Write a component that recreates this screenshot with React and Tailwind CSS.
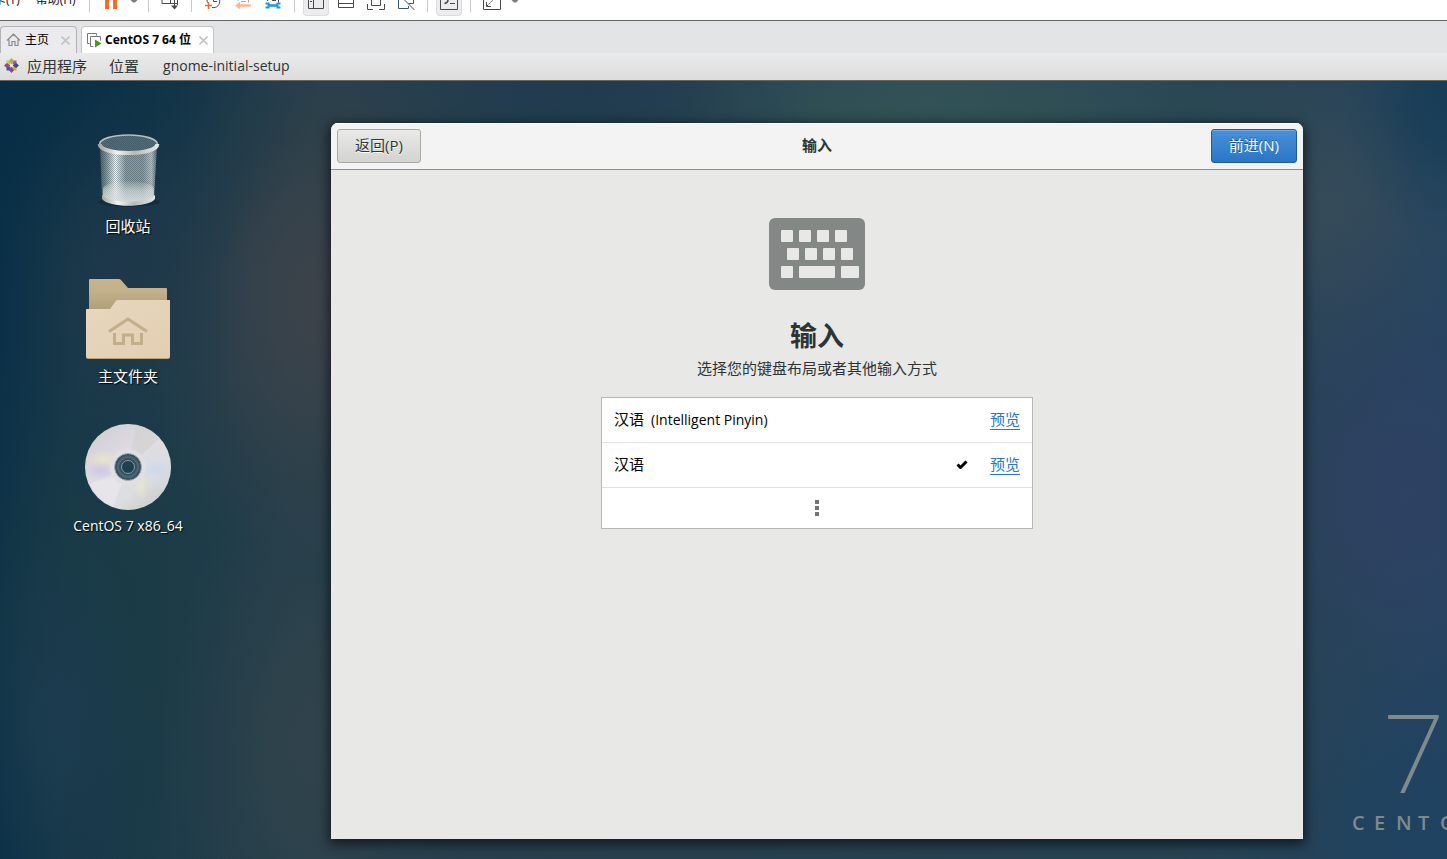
import React from "react";

const LATIN = "font-['Open_Sans','Noto_Sans_CJK_SC',sans-serif]";

function Separator() {
  return <span aria-hidden="true" className="mx-1.5 h-3 w-px shrink-0 bg-[#c9c9c9]" />;
}

function ToolButton({ label, active = false, children }) {
  return (
    <button
      type="button"
      aria-label={label}
      className={
        active
          ? "mx-0.5 flex h-4 w-[26px] shrink-0 justify-center rounded-b border border-t-0 border-[#dcdcdd] bg-[#ececee]"
          : "mx-0.5 flex h-4 w-[26px] shrink-0 justify-center"
      }
    >
      <svg className="shrink-0" width="18" height="12" viewBox="0 0 18 12" fill="none" stroke="#4a4a4a" strokeWidth="1">
        {children}
      </svg>
    </button>
  );
}

function CaretButton({ label }) {
  return (
    <button type="button" aria-label={label} className="flex w-4 shrink-0 justify-center">
      <svg width="8" height="4" viewBox="0 0 8 4" fill="#7c7c7c">
        <path d="M0.5 0h7L5 2.4H3z" />
      </svg>
    </button>
  );
}

function Toolbar() {
  return (
    <header className="flex h-5 shrink-0 items-start overflow-hidden bg-white">
      <nav className="-mt-2 mr-[7px] -ml-[30px] flex gap-4 text-xs/4 text-[#111] font-['Open_Sans','Noto_Sans_CJK_SC',sans-serif]">
        <button type="button" className="whitespace-nowrap">选项卡(T)</button>
        <button type="button" className="whitespace-nowrap">帮助(H)</button>
      </nav>
      <Separator />
      <ToolButton label="暂停">
        <path d="M3 0h4v9H3zM11 0h4v9h-4z" fill="#ff6a1f" stroke="none" />
      </ToolButton>
      <CaretButton label="电源选项" />
      <Separator />
      <ToolButton label="发送 Ctrl+Alt+Del">
        <path d="M1 0v3.500H10M9.500 0v3.500M16.500 0v5M13.500 0v8M10 3.500h6" />
        <path d="M10 5.500h7l-3.500 4z" fill="#4a4a4a" stroke="none" />
      </ToolButton>
      <Separator />
      <ToolButton label="拍摄快照">
        <path d="M3 0c0 1 .3 2 .8 2.8M8 7.4C13 8.500 16.200 4.500 15.700 0M9.500 0v1.500H13" />
        <path d="M4.500 2v7M1 5.500h7" stroke="#f2692a" strokeWidth="1.500" />
      </ToolButton>
      <ToolButton label="恢复快照">
        <path d="M4 0v1M14.500 0v2.500M7 1.500h5" stroke="#a8a8a8" />
        <path d="M6 2 1.500 5.500 6 9V6.500h10.500v-2H6z" fill="#ffb48f" stroke="#ffb48f" strokeWidth="0.500" />
      </ToolButton>
      <ToolButton label="管理快照">
        <path d="M3.500 0v1M14.500 0v2.500M8 .5h4" />
        <path d="M4 5.500h9" stroke="#2696e0" strokeWidth="2.600" />
        <path d="M1.500 3.500h3v4h-3M16.500 3.500h-3v4h3" stroke="#2696e0" strokeWidth="2" />
      </ToolButton>
      <Separator />
      <ToolButton label="显示库" active>
        <path d="M1.500 0v8.500h15V0M6.500 0v8M3 1.500h2" />
      </ToolButton>
      <ToolButton label="缩略图栏">
        <path d="M1.500 0v7.500h15V0M1.500 3.500h15" />
      </ToolButton>
      <ToolButton label="全屏">
        <path d="M4.500 0v5.500h9V0M.5 4v5.500H6M12 9.500h5.500V4" />
      </ToolButton>
      <ToolButton label="Unity">
        <path d="M1.500 0v8.500h10V6M11.500 3.500h5V0" stroke="#33566f" />
        <path d="M5.500-2 17.500 10" />
      </ToolButton>
      <Separator />
      <ToolButton label="控制台视图" active>
        <path d="M.5 0v9.500h17V0M10 3.500h5" />
        <path d="M4.500 3.500C7 3 8 1.500 8 0" strokeWidth="1.500" />
      </ToolButton>
      <Separator />
      <ToolButton label="自由拉伸">
        <path d="M.5 0v9.500h17V0M3.500 2v4.500H8" />
        <path d="m4 6 7-7" strokeDasharray="2 1" />
      </ToolButton>
      <CaretButton label="拉伸选项" />
    </header>
  );
}

function CloseGlyph() {
  return (
    <svg width="9" height="9" viewBox="0 0 9 9" stroke="#c3c3c3" strokeWidth="1.600">
      <path d="M.5.5l8 8M8.500.5l-8 8" />
    </svg>
  );
}

function TabStrip() {
  return (
    <div className={`flex h-8 shrink-0 items-end gap-1 bg-[#e3e4e6] text-xs text-black ${LATIN}`}>
      <div className="flex h-[27px] items-center rounded-t border border-b-0 border-[#b4b4b6] bg-[#ebebed] px-1.5 pl-[5px]">
        <button type="button" className="flex items-center gap-1">
          <svg width="15" height="14" viewBox="0 0 15 14" fill="none" stroke="#8b8b8b" strokeWidth="1.200">
            <path d="M1 7.500 7.500 1.200 14 7.500M3 6.500v6h3V8.500h3v4h3v-6" />
          </svg>
          <span>主页</span>
        </button>
        <button type="button" aria-label="关闭主页" className="ml-3">
          <CloseGlyph />
        </button>
      </div>
      <div className="flex h-[27px] items-center rounded-t border border-b-0 border-[#c4c4c6] bg-white px-[5px]">
        <button type="button" className="flex items-center gap-[3px] font-bold">
          <svg width="15" height="15" viewBox="0 0 15 15" fill="none" stroke="#777">
            <path d="M2.500 10.500h-2V.5h9v2M6.500 13.500h-3V3.500h10v4" />
            <path d="M8 6.500v8l6.500-4z" fill="#3f9c1c" stroke="none" />
          </svg>
          <span className="whitespace-nowrap">CentOS 7 64 位</span>
        </button>
        <button type="button" aria-label="关闭 CentOS 7 64 位" className="ml-2">
          <CloseGlyph />
        </button>
      </div>
    </div>
  );
}

function CentosMark() {
  return (
    <svg width="15" height="15" viewBox="0 0 15 15">
      <path d="M2.500 2.500h4v4h-4z" fill="#b9cf52" />
      <path d="M8.500 2.500h4v4h-4z" fill="#a8559b" />
      <path d="M2.500 8.500h4v4h-4z" fill="#4d5796" />
      <path d="M8.500 8.500h4v4h-4z" fill="#e6a52e" />
      <path d="M7.500 0 10 2.800 7.500 6.500 5 2.800z" fill="#a9b53c" />
      <path d="M7.500 15 5 12.200l2.500-3.700L10 12.200z" fill="#7d4a96" />
      <path d="M0 7.500 2.800 5l3.700 2.500L2.800 10z" fill="#a23d91" />
      <path d="M15 7.500 12.200 10 8.500 7.500 12.200 5z" fill="#3b478d" />
      <circle cx="7.500" cy="7.500" r="1.200" fill="#f2f2f2" />
    </svg>
  );
}

function GnomePanel() {
  return (
    <nav
      className={`flex h-7 shrink-0 items-center gap-[22px] border-b border-[#66665f] bg-linear-to-b from-[#ebebeb] to-[#dcdcdc] pb-0.5 pl-1 text-[15px]/6 text-[#2e3436] ${LATIN}`}
    >
      <button type="button" className="flex items-center gap-2">
        <CentosMark />
        <span>应用程序</span>
      </button>
      <button type="button">位置</button>
      <button type="button" className="pl-0.5 text-sm/6">gnome-initial-setup</button>
    </nav>
  );
}

function Wallpaper() {
  const glows = [
    ["g1", "#1a3b45", 100, 540, 200, 320],
    ["g2", "#41444a", 325, 220, 190, 270],
    ["g3", "#32444c", 320, 660, 160, 260],
    ["g4", "#1c3b50", 60, 640, 90, 200],
    ["g5", "#335556", 930, 20, 400, 190],
    ["g6", "#1f3a4e", 590, 10, 240, 130],
    ["g7", "#384c5a", 1330, 130, 150, 190],
    ["g8", "#2f4163", 1410, 410, 220, 300],
    ["g9", "#1e4262", 1447, 760, 240, 220],
    ["g10", "#062d45", 60, 0, 260, 240],
    ["g11", "#153b55", 1447, 10, 110, 150],
    ["g12", "#1f384a", 130, 190, 120, 200],
  ];
  return (
    <svg
      aria-hidden="true"
      className="absolute inset-0 size-full"
      viewBox="0 0 1447 778"
      preserveAspectRatio="none"
    >
      <defs>
        <linearGradient id="base" x1="0" x2="1">
          <stop offset="0" stopColor="#0a3048" />
          <stop offset="0.050" stopColor="#173849" />
          <stop offset="0.200" stopColor="#263f4b" />
          <stop offset="0.900" stopColor="#274354" />
          <stop offset="1" stopColor="#234560" />
        </linearGradient>
        {glows.map(([id, color]) => (
          <radialGradient key={id} id={id}>
            <stop offset="0" stopColor={color} stopOpacity="0.850" />
            <stop offset="0.300" stopColor={color} stopOpacity="0.650" />
            <stop offset="0.650" stopColor={color} stopOpacity="0.250" />
            <stop offset="1" stopColor={color} stopOpacity="0" />
          </radialGradient>
        ))}
      </defs>
      <rect width="1447" height="778" fill="url(#base)" />
      {glows.map(([id, , cx, cy, rx, ry]) => (
        <ellipse key={id} cx={cx} cy={cy} rx={rx} ry={ry} fill={`url(#${id})`} />
      ))}
    </svg>
  );
}

function CentosLogo() {
  return (
    <div
      aria-hidden="true"
      className="absolute right-0 bottom-[22px] flex w-[95px] flex-col overflow-hidden text-[#7f8a8b]"
    >
      <span className="pl-8 font-[Roboto,sans-serif] text-[110px]/[106px] font-extralight">7</span>
      <span className="flex font-['Open_Sans',sans-serif] text-xl/7 font-semibold">
        {["C", "E", "N", "T", "O", "S"].map((letter, i) => (
          <span key={i} className="w-[22px] shrink-0">{letter}</span>
        ))}
      </span>
    </div>
  );
}

function TrashIcon() {
  return (
    <svg width="96" height="88" viewBox="0 0 96 88">
      <defs>
        <linearGradient id="bin" x1="0" x2="1">
          <stop offset="0" stopColor="#4b6067" />
          <stop offset="0.120" stopColor="#8a999b" />
          <stop offset="0.270" stopColor="#eef1f1" />
          <stop offset="0.450" stopColor="#8d9b9f" />
          <stop offset="0.750" stopColor="#8b989c" />
          <stop offset="0.900" stopColor="#bcc4c5" />
          <stop offset="1" stopColor="#5f6f75" />
        </linearGradient>
        <linearGradient id="rim" x1="0" x2="1">
          <stop offset="0" stopColor="#a5a5a5" />
          <stop offset="0.300" stopColor="#f3f3f3" />
          <stop offset="0.600" stopColor="#b9b9b9" />
          <stop offset="1" stopColor="#e5e5e5" />
        </linearGradient>
        <linearGradient id="floor" x1="0" x2="0" y1="0" y2="1">
          <stop offset="0" stopColor="#dfe3e2" stopOpacity="0.100" />
          <stop offset="0.400" stopColor="#dfe3e2" stopOpacity="0.600" />
          <stop offset="1" stopColor="#dfe3e2" stopOpacity="0.900" />
        </linearGradient>
        <pattern id="mesh" width="2" height="2" patternUnits="userSpaceOnUse">
          <path d="M0 0h1v1H0zM1 1h1v1H1z" fill="#17384a" fillOpacity="0.300" />
        </pattern>
      </defs>
      <ellipse cx="49" cy="80" rx="31" ry="5" fill="#061d2b" fillOpacity="0.350" />
      <path d="M20 24 22 76c6 9 46 9 52 0l3-52z" fill="url(#bin)" />
      <path d="M20 24 22 76c6 9 46 9 52 0l3-52z" fill="url(#mesh)" />
      <path d="M23 66c4-9 47-9 51 0v10c-6 8-45 8-51 0z" fill="url(#floor)" />
      <path d="M22 73c8 9 44 9 53 0v4c-6 9-47 9-53 0z" fill="url(#rim)" />
      <ellipse cx="48.500" cy="22" rx="28.500" ry="8.500" fill="#566d78" />
      <ellipse cx="48.500" cy="22" rx="28.500" ry="8.500" fill="url(#mesh)" />
      <ellipse cx="48.500" cy="22" rx="28.800" ry="9" fill="none" stroke="#b9bebf" strokeWidth="1.600" />
      <path d="M19.700 22c0 12 57.600 12 57.600 0" fill="none" stroke="url(#rim)" strokeWidth="4" />
    </svg>
  );
}

function FolderIcon() {
  return (
    <svg width="96" height="88" viewBox="0 -4 96 88">
      <defs>
        <linearGradient id="back" x1="0" x2="0" y1="0" y2="1">
          <stop offset="0" stopColor="#c5b48e" />
          <stop offset="0.300" stopColor="#c2b08b" />
          <stop offset="1" stopColor="#a5946f" />
        </linearGradient>
        <linearGradient id="front" x1="0" x2="1" y1="0" y2="1">
          <stop offset="0" stopColor="#e8d7be" />
          <stop offset="1" stopColor="#e2ceb2" />
        </linearGradient>
      </defs>
      <path d="M9 4q0-1 1-1h29q1 0 2 1l7 8h38q1 0 1 1v32H9z" fill="url(#back)" />
      <path d="M6 34q0-1 1-1h23l5-7q1-2 3-2h51q1 0 1 1v56q0 2-2 2H8q-2 0-2-2z" fill="#b7a27e" />
      <path d="M6 34q0-1 1-1h23l5-7q1-2 3-2h51q1 0 1 1v55q0 2-2 2H8q-2 0-2-2z" fill="url(#front)" />
      <path
        d="M29 55.500 48 43l19 12.500M34.500 57v10.500h9V59h9v8.500h9V57"
        fill="none"
        stroke="#c3ae8b"
        strokeWidth="3"
      />
    </svg>
  );
}

function DiscIcon() {
  return (
    <svg width="96" height="88" viewBox="0 1 96 88">
      <defs>
        <linearGradient id="disc" x1="0.100" x2="0.900" y1="0" y2="1">
          <stop offset="0" stopColor="#cfcdd1" />
          <stop offset="0.400" stopColor="#dedce3" />
          <stop offset="0.700" stopColor="#dcdedf" />
          <stop offset="1" stopColor="#c9c7c8" />
        </linearGradient>
        <radialGradient id="violet">
          <stop offset="0" stopColor="#c9c0e6" stopOpacity="0.700" />
          <stop offset="1" stopColor="#c9c0e6" stopOpacity="0" />
        </radialGradient>
        <radialGradient id="yellow">
          <stop offset="0" stopColor="#ece8c8" stopOpacity="0.700" />
          <stop offset="1" stopColor="#ece8c8" stopOpacity="0" />
        </radialGradient>
        <radialGradient id="blue">
          <stop offset="0" stopColor="#c8d6ee" stopOpacity="0.700" />
          <stop offset="1" stopColor="#c8d6ee" stopOpacity="0" />
        </radialGradient>
      </defs>
      <circle cx="48" cy="46" r="43" fill="url(#disc)" />
      <path d="M48 46 56 3.700A43 43 0 0 1 80 17.300z" fill="#d2cfcd" fillOpacity="0.600" />
      <path d="M48 46 90 37A43 43 0 0 1 84 69z" fill="#d5dbe8" fillOpacity="0.500" />
      <path d="M48 46 33 86A43 43 0 0 1 10 63z" fill="#eeeaf0" fillOpacity="0.600" />
      <ellipse cx="23" cy="38" rx="17" ry="9" fill="url(#yellow)" />
      <ellipse cx="21" cy="50" rx="17" ry="10" fill="url(#violet)" />
      <ellipse cx="76" cy="48" rx="16" ry="8" fill="url(#blue)" />
      <ellipse cx="61" cy="66" rx="7" ry="14" fill="url(#yellow)" />
      <circle cx="48" cy="46" r="18" fill="#e0dfe3" />
      <circle cx="48" cy="46" r="13.500" fill="#35505f" stroke="#a4b0b7" />
      <circle cx="48" cy="46" r="10" fill="none" stroke="#4d6673" strokeWidth="2" />
      <circle cx="48" cy="46" r="6.500" fill="#1e3f50" stroke="#8799a3" />
    </svg>
  );
}

function DesktopItem({ label, icon, small = false }) {
  return (
    <button type="button" className="flex flex-col items-center gap-1">
      {icon}
      <span
        className={
          small
            ? "text-sm/6 text-white [text-shadow:1px_1px_1px_#000]"
            : "text-[15px]/6 text-white [text-shadow:1px_1px_1px_#000]"
        }
      >
        {label}
      </span>
    </button>
  );
}

function KeyboardIcon() {
  const keys = [
    [12, 12, 12], [30, 12, 12], [48, 12, 12], [66, 12, 12],
    [18, 30, 12], [36, 30, 12], [54, 30, 12], [72, 30, 12],
    [12, 48, 12], [30, 48, 36], [72, 48, 18],
  ];
  return (
    <svg width="96" height="72" viewBox="0 0 96 72" aria-hidden="true">
      <rect width="96" height="72" rx="6" fill="#838786" />
      {keys.map(([x, y, w]) => (
        <rect key={`${x}-${y}`} x={x} y={y} width={w} height="12" rx="1" fill="#e8e8e6" />
      ))}
    </svg>
  );
}

function InputRow({ name, selected = false }) {
  return (
    <li className="flex h-[45px] items-center gap-[22px] border-b border-[#e1e1e0] px-3 pb-0.5">
      <button type="button" className="flex flex-1 items-center justify-between text-left">
        <span className="whitespace-pre">{name}</span>
        {selected && (
          <svg width="12" height="10" viewBox="0 0 12 10" role="img" aria-label="已选择">
            <path d="m1.500 5.500 3 3 6-6" fill="none" stroke="#000" strokeWidth="3" />
          </svg>
        )}
      </button>
      <a href="#preview" className="border-b border-[#2a76c6] text-[15px]/5 text-[#2a76c6]">
        预览
      </a>
    </li>
  );
}

function SetupWindow() {
  return (
    <section
      className={`relative mt-[42px] mr-36 mb-5 flex flex-1 flex-col overflow-hidden rounded-t-[7px] bg-[#e8e8e6] text-[15px] text-[#2e3436] shadow-[0_3px_12px_2px_rgba(0,0,0,0.6)] ${LATIN}`}
    >
      <div className="grid grid-cols-[1fr_auto_1fr] items-center border-b border-[#8f8f8b] bg-[#f3f3f3] p-1.5 shadow-[inset_0_1px_0_#fff]">
        <button
          type="button"
          className="h-[34px] justify-self-start rounded-[3px] border border-[#a9a9a5] bg-linear-to-b from-[#e9e9e7] to-[#d3d3d0] px-[17px] pb-0.5 [text-shadow:0_1px_0_#fff]"
        >
          返回(P)
        </button>
        <h1 className="pb-0.5 font-bold">输入</h1>
        <button
          type="button"
          className="h-[34px] justify-self-end rounded-[3px] border border-[#1f5a9c] bg-linear-to-b from-[#4a90d9] to-[#2a76c6] px-[17px] pb-0.5 text-white [text-shadow:0_-1px_0_#1c4f88] shadow-[inset_0_1px_0_#74abe4]"
        >
          前进(N)
        </button>
      </div>
      <div className="flex flex-1 flex-col items-center pt-12">
        <KeyboardIcon />
        <h2 className="mt-[26px] text-[27px]/10 font-bold">输入</h2>
        <p className="leading-6">选择您的键盘布局或者其他输入方式</p>
        <ul className="mt-[17px] w-[432px] border border-[#b6b6b3] bg-white text-black">
          <InputRow
            name={
              <>
                汉语<span className="ml-[7px] text-sm">(Intelligent Pinyin)</span>
              </>
            }
          />
          <InputRow name="汉语" selected />
          <li className="flex h-10">
            <button type="button" aria-label="更多" className="flex flex-1 items-center justify-center">
              <svg width="4" height="16" viewBox="0 0 4 16" fill="#747474">
                <path d="M0 0h4v4H0zM0 6h4v4H0zM0 12h4v4H0z" />
              </svg>
            </button>
          </li>
        </ul>
      </div>
    </section>
  );
}

export default function App() {
  return (
    <div className="flex min-h-screen flex-col overflow-hidden">
      <Toolbar />
      <div className="h-px shrink-0 bg-[#666664]" />
      <TabStrip />
      <GnomePanel />
      <main className="relative flex flex-1 overflow-hidden">
        <Wallpaper />
        <CentosLogo />
        <div className={`relative mr-[75px] flex w-64 shrink-0 flex-col items-center gap-[34px] pt-[41px] ${LATIN}`}>
          <DesktopItem label="回收站" icon={<TrashIcon />} />
          <DesktopItem label="主文件夹" icon={<FolderIcon />} />
          <DesktopItem label="CentOS 7 x86_64" icon={<DiscIcon />} small />
        </div>
        <SetupWindow />
      </main>
    </div>
  );
}
